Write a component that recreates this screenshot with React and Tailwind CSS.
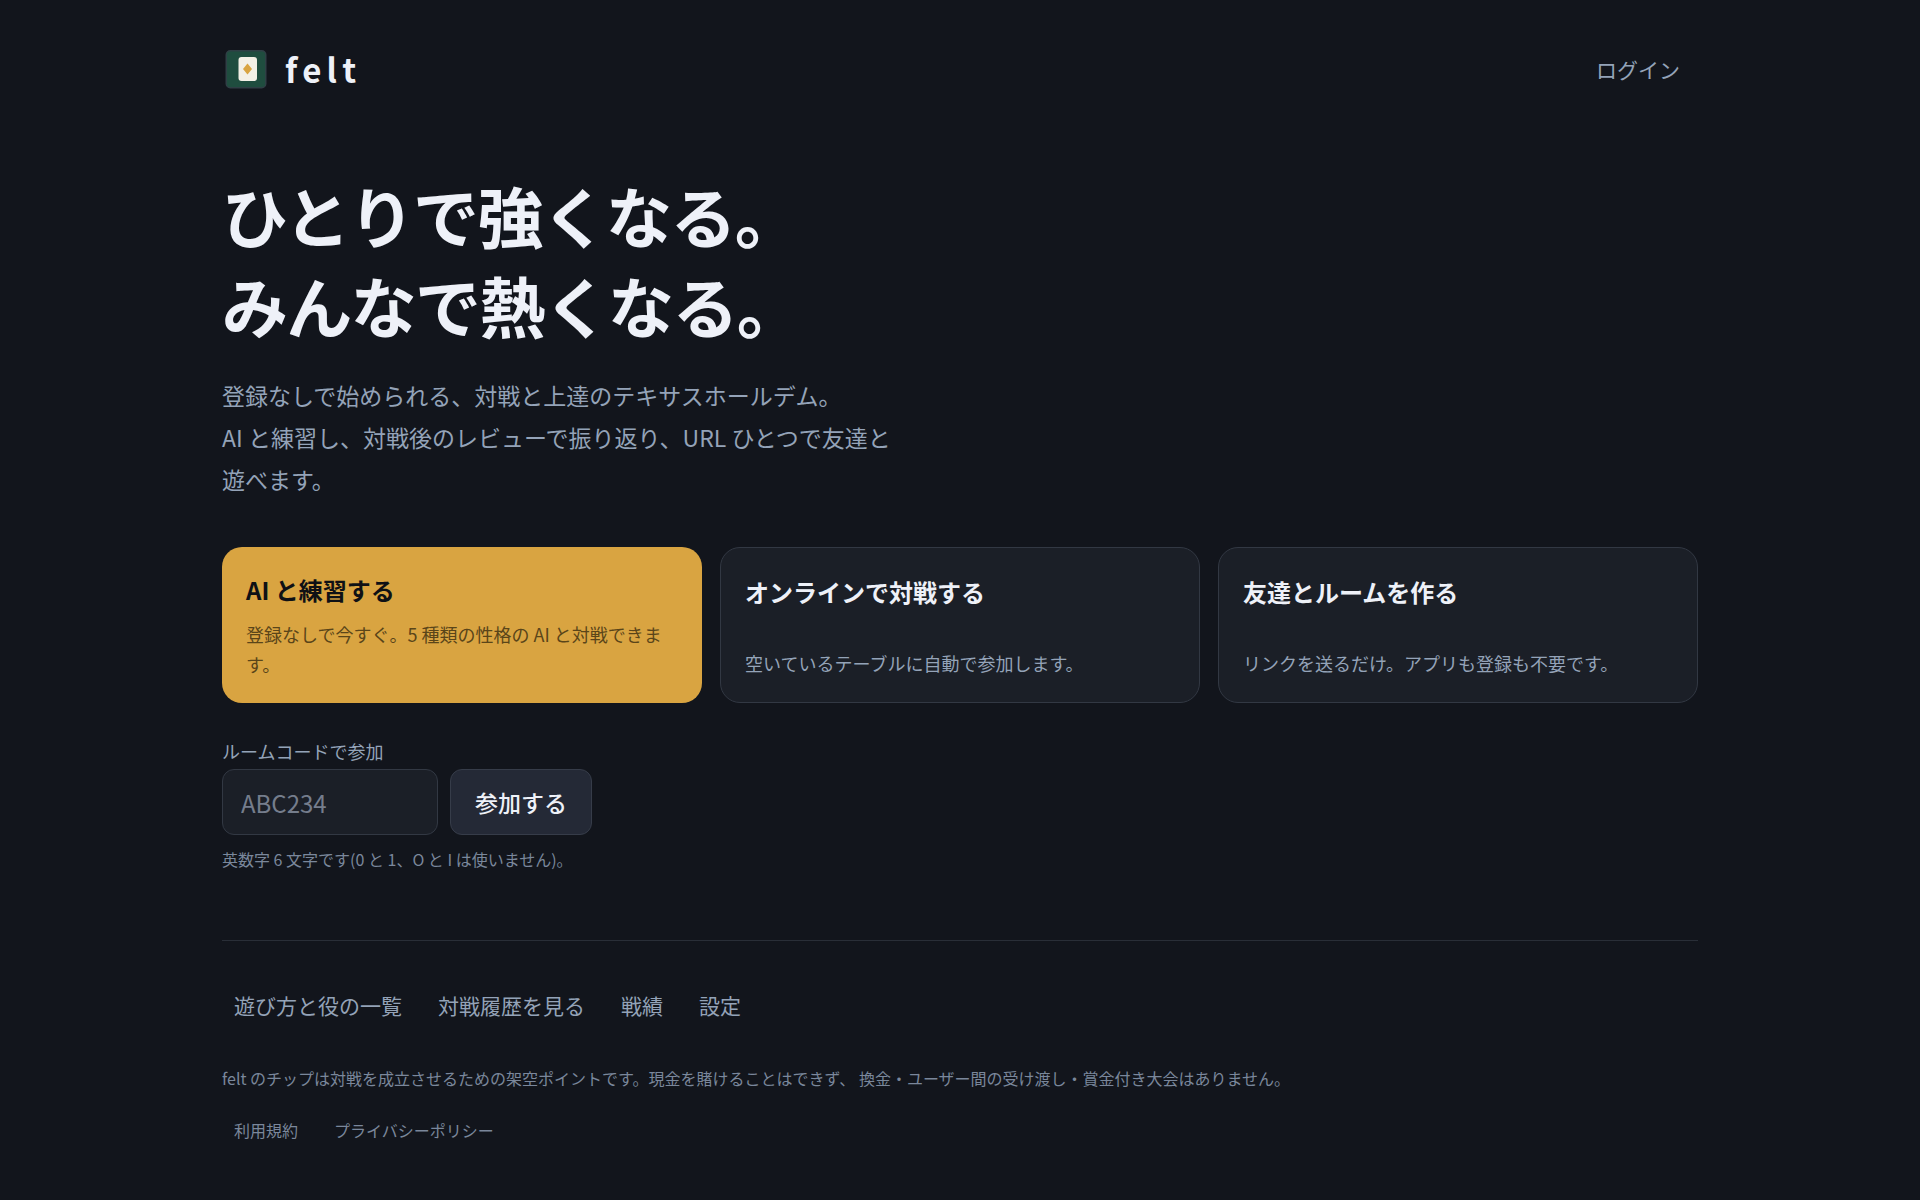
import React from 'react'

const modes = [
    { title: 'オンラインで対戦する', text: '空いているテーブルに自動で参加します。' },
    { title: '友達とルームを作る', text: 'リンクを送るだけ。アプリも登録も不要です。' },
]

const navLinks = ['遊び方と役の一覧', '対戦履歴を見る', '戦績', '設定']
const legalLinks = ['利用規約', 'プライバシーポリシー']

function Logo() {
    return (
        <svg className="w-12 h-12" viewBox="0 0 48 48" aria-hidden="true">
            <rect x="4.25" y="5.75" width="39.5" height="37" rx="4" fill="#1f4d3f" stroke="#2f3f45" strokeWidth="1.5" />
            <rect x="16.5" y="12" width="18.5" height="24" rx="3" fill="#f3f0e6" />
            <path d="M25.5 18.5 L30 24 L25.5 29.5 L21 24 Z" fill="#d9a441" />
        </svg>
    )
}

function Header() {
    return (
        <header className="flex items-center justify-between">
            <a href="#" className="flex items-center gap-[15px]">
                <Logo />
                <span className="text-[33px] leading-12 font-bold tracking-[0.16em]">felt</span>
            </a>
            <a href="#" className="px-[18px] text-[21px] leading-12 text-[#94a3b8]">ログイン</a>
        </header>
    )
}

function JoinForm() {
    return (
        <form className="mt-8">
            <label htmlFor="room" className="block text-lg leading-8 text-[#94a3b8]">ルームコードで参加</label>
            <div className="mt-0.5 flex gap-3">
                <input
                    id="room"
                    type="text"
                    placeholder="ABC234"
                    className="w-[216px] h-[66px] px-[18px] rounded-xl border border-[#323843] bg-[#1b1f27] text-2xl placeholder:text-[#757d8c]"
                />
                <button type="button" className="h-[66px] px-6 rounded-xl border border-[#363c49] bg-[#242936] text-[23px] font-medium">
                    参加する
                </button>
            </div>
            <p className="mt-3 text-base leading-6 text-[#7a879b]">英数字 6 文字です(0 と 1、O と I は使いません)。</p>
        </form>
    )
}

function Footer() {
    return (
        <footer className="mt-[69px] pt-10 border-t border-[#292e37]">
            <nav className="flex gap-3">
                {navLinks.map((name) => (
                    <a key={name} href="#" className="px-3 text-[21px] leading-12 text-[#94a3b8]">{name}</a>
                ))}
            </nav>
            <p className="mt-[35px] text-base leading-7 text-[#7a879b]">
                felt のチップは対戦を成立させるための架空ポイントです。現金を賭けることはできず、 換金・ユーザー間の受け渡し・賞金付き大会はありません。
            </p>
            <div className="mt-3.5 flex gap-3">
                {legalLinks.map((name) => (
                    <a key={name} href="#" className="px-3 text-base leading-12 text-[#7a879b]">{name}</a>
                ))}
            </div>
        </footer>
    )
}

function App() {
    return (
        <div lang="ja" className="min-h-screen bg-[#12151c] px-6 pt-[45px] pb-10 text-[#eef1f8] font-['Noto_Sans_CJK_JP',sans-serif]">
            <div className="max-w-[1476px] mx-auto">
                <Header />
                <main>
                    <h1 className="mt-[76px] text-[66px] leading-[90px] font-bold tracking-tight">
                        ひとりで強くなる。<br />
                        みんなで熱くなる。
                    </h1>
                    <p className="mt-[25px] max-w-[684px] text-[23px] leading-[42px] text-[#94a3b8]">
                        登録なしで始められる、対戦と上達のテキサスホールデム。<br />
                        AI と練習し、対戦後のレビューで振り返り、URL ひとつで友達と遊べます。
                    </p>
                    <div className="mt-[47px] grid grid-cols-3 gap-[18px]">
                        <a href="#" className="flex flex-col justify-center gap-2.5 p-6 rounded-[20px] bg-[#d9a441] text-[#0f1115]">
                            <span className="text-2xl leading-[38px] font-semibold">AI と練習する</span>
                            <span className="text-lg leading-[30px] text-[#5a4519]">登録なしで今すぐ。5 種類の性格の AI と対戦できます。</span>
                        </a>
                        {modes.map((mode) => (
                            <a key={mode.title} href="#" className="flex flex-col justify-between p-6 rounded-[20px] border border-[#323843] bg-[#1b1f27]">
                                <span className="text-2xl leading-10 font-bold">{mode.title}</span>
                                <span className="text-lg leading-[30px] text-[#94a3b8]">{mode.text}</span>
                            </a>
                        ))}
                    </div>
                    <JoinForm />
                </main>
                <Footer />
            </div>
        </div>
    )
}

export default App
